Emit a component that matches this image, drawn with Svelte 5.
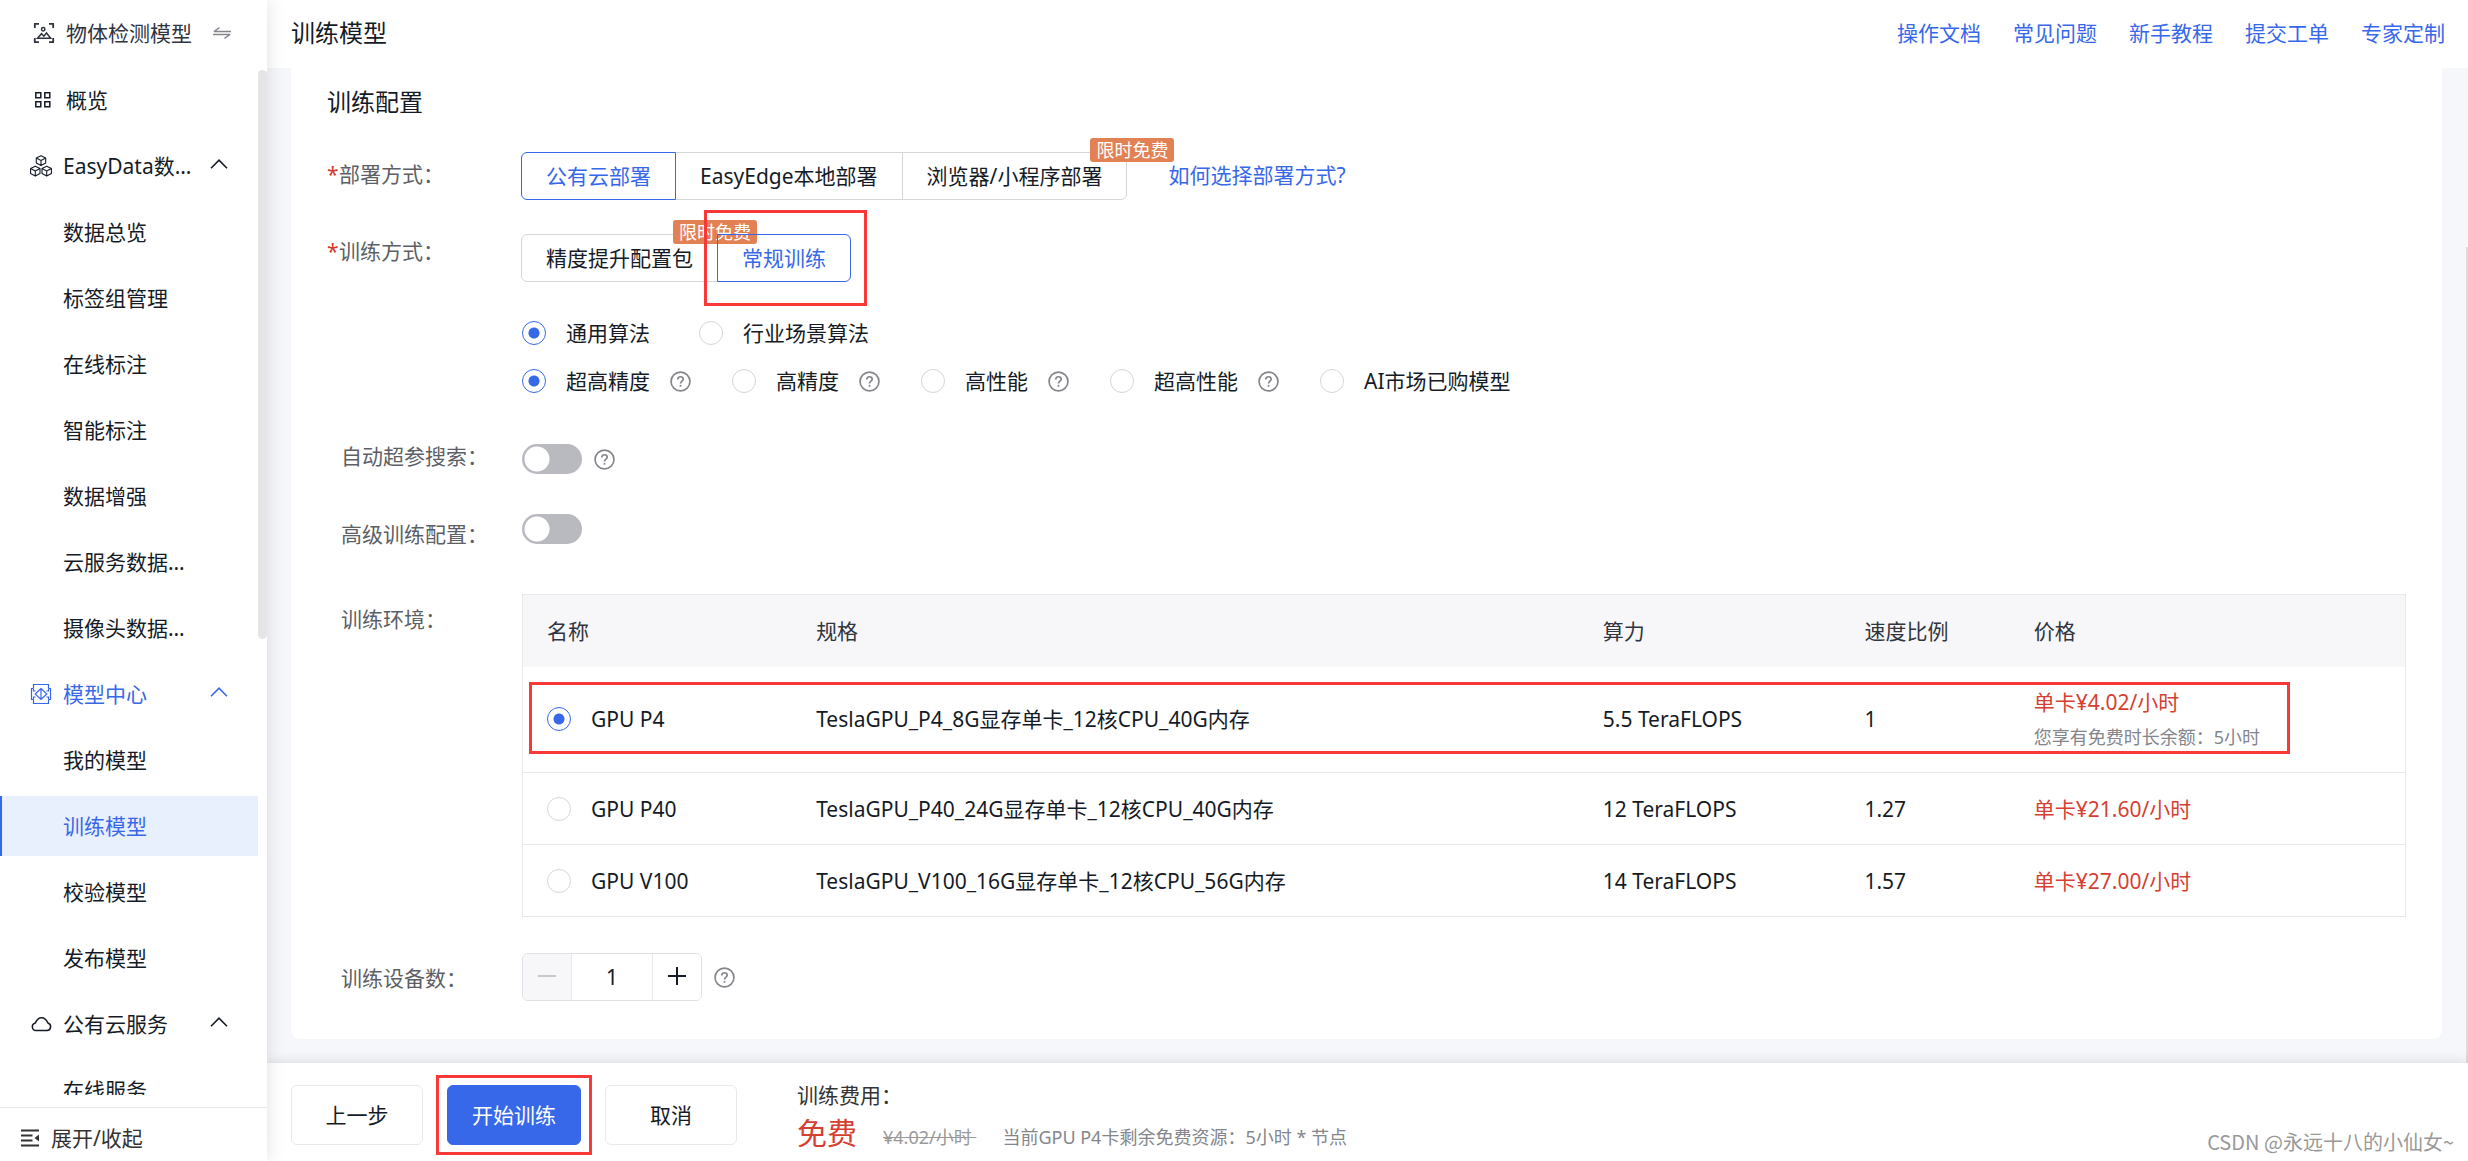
<script>
	const links = ['操作文档', '常见问题', '新手教程', '提交工单', '专家定制'];

	const menu = [
		{ name: '概览', icon: 'grid', top: true },
		{ name: 'EasyData数…', icon: 'cubes', group: true },
		{ name: '数据总览' },
		{ name: '标签组管理' },
		{ name: '在线标注' },
		{ name: '智能标注' },
		{ name: '数据增强' },
		{ name: '云服务数据…' },
		{ name: '摄像头数据…' },
		{ name: '模型中心', icon: 'model', group: true, open: true },
		{ name: '我的模型' },
		{ name: '训练模型', active: true },
		{ name: '校验模型' },
		{ name: '发布模型' },
		{ name: '公有云服务', icon: 'cloud', group: true },
		{ name: '在线服务' }
	];

	const deploys = [
		{ name: '公有云部署' },
		{ name: 'EasyEdge本地部署' },
		{ name: '浏览器/小程序部署', free: true }
	];
	const modes = [{ name: '精度提升配置包', free: true }, { name: '常规训练', marked: true }];

	const algos = ['通用算法', '行业场景算法'];
	const precisions = [
		{ name: '超高精度', help: true },
		{ name: '高精度', help: true },
		{ name: '高性能', help: true },
		{ name: '超高性能', help: true },
		{ name: 'AI市场已购模型' }
	];

	const gpus = [
		{ name: 'GPU P4', spec: 'TeslaGPU_P4_8G显存单卡_12核CPU_40G内存', flops: '5.5 TeraFLOPS', ratio: '1', price: '4.02', free: '您享有免费时长余额：5小时' },
		{ name: 'GPU P40', spec: 'TeslaGPU_P40_24G显存单卡_12核CPU_40G内存', flops: '12 TeraFLOPS', ratio: '1.27', price: '21.60' },
		{ name: 'GPU V100', spec: 'TeslaGPU_V100_16G显存单卡_12核CPU_56G内存', flops: '14 TeraFLOPS', ratio: '1.57', price: '27.00' }
	];

	let deploy = $state('公有云部署');
	let mode = $state('常规训练');
	let algo = $state('通用算法');
	let precision = $state('超高精度');
	let gpu = $state('GPU P4');
	let autoSearch = $state(false);
	let advanced = $state(false);
	let count = $state(1);
</script>

{#snippet help()}
	<svg class="help" viewBox="0 0 20 20" fill="none" stroke="currentColor" stroke-width="1.6">
		<circle cx="10" cy="10" r="9" />
		<path d="M7.4 8.1c0-1.6 1.1-2.6 2.6-2.6s2.6 1 2.6 2.4c0 1.7-2.6 1.9-2.6 4" />
		<path d="M10 13.2v1.8" />
	</svg>
{/snippet}

{#snippet chevron()}
	<svg class="chevron" viewBox="0 0 18 10" fill="none" stroke="currentColor" stroke-width="1.6">
		<path d="M1 9.2 9 1.2l8 8" />
	</svg>
{/snippet}

{#snippet icon(kind)}
	<svg class="icon" viewBox="0 0 22 22" fill="none" stroke="currentColor" stroke-width="1.5">
		{#if kind === 'grid'}
			<path d="M3.8 3.8h5v5h-5zM12.8 3.8h5v5h-5zM3.8 12.8h5v5h-5zM12.8 12.8h5v5h-5z" />
		{:else if kind === 'cubes'}
			<g stroke-width="1.1" stroke-linejoin="round">
				<path d="M11 .7l4.7 2.3v5L11 10.5 6.3 8V3zM6.3 3 11 5.4l4.7-2.4M11 5.4v5.1" />
				<path d="M5.3 11.2l4.7 2.3v5l-4.7 2.6-4.7-2.6v-5zM.6 13.5l4.7 2.4 4.7-2.4M5.3 15.9v5.2" />
				<path d="M16.7 11.2l4.7 2.3v5l-4.7 2.6-4.7-2.6v-5zM12 13.5l4.7 2.4 4.7-2.4M16.7 15.9v5.2" />
			</g>
		{:else if kind === 'model'}
			<g stroke-width="1.2">
				<path d="M3.5 5.5V1.5h15v4M3.5 16.5v4h15v-4M3.5 5.5H1.5v11h2M18.5 5.5h2v11h-2" />
				<path d="M11 5.5 5.2 11 11 16.5 16.8 11zM11 5.5v11M3.5 5.5v2.5h2M18.5 5.5v2.5h-2M3.5 16.5V14h2M18.5 16.5V14h-2" />
			</g>
		{:else if kind === 'cloud'}
			<path d="M6 17.6h11a3.9 3.9 0 0 0 .9-7.6C16.5 6.7 14.1 4.7 11.5 4.7S6.7 6.7 5.4 9.9A3.9 3.9 0 0 0 6 17.6z" />
		{:else if kind === 'detect'}
			<path d="M1.8 6V1.8H6M16 1.8h4.2V6M20.2 16v4.2H16M6 20.2H1.8V16" stroke-width="1.8" />
			<circle cx="10.2" cy="7.2" r="1.7" />
			<path d="M4.5 16.2l4-4.5 2.4 2.5 2.6-3.2 4.2 5.2z" />
		{:else if kind === 'fold'}
			<path d="M2 3.5h18M2 8.5h11.5M2 13.5h11.5M2 18.5h18" stroke-width="1.8" />
			<path d="M20 7.5v7L15.5 11z" fill="currentColor" stroke="none" />
		{/if}
	</svg>
{/snippet}

<div class="page">
	<aside>
		<div class="project">
			{@render icon('detect')}
			<span>物体检测模型</span>
			<svg class="swap" viewBox="0 0 18 12" fill="none" stroke="currentColor" stroke-width="1.3" stroke-linejoin="bevel">
				<path d="M18 4.5H1L6.5.6M0 7.5h17l-5.5 3.9" />
			</svg>
		</div>
		<nav>
			{#each menu as item}
				<a href="#top" class="item" class:top={item.top} class:open={item.open} class:active={item.active}>
					{#if item.icon}
						{@render icon(item.icon)}
					{/if}
					<span class="name">{item.name}</span>
					{#if item.group}
						{@render chevron()}
					{/if}
				</a>
			{/each}
			<div class="thumb"></div>
		</nav>
		<button class="fold">{@render icon('fold')}展开/收起</button>
	</aside>

	<main>
		<header>
			<h1>训练模型</h1>
			<div class="links">
				{#each links as link}
					<a href="#top">{link}</a>
				{/each}
			</div>
		</header>

		<div class="scroll">
			<section class="card">
				<h2>训练配置</h2>

				<div class="row deploy">
					<div class="label"><i>*</i>部署方式：</div>
					<div class="field">
						<div class="group">
							{#each deploys as d}
								<button class="option" class:on={deploy === d.name} onclick={() => (deploy = d.name)}>
									{d.name}
									{#if d.free}<span class="badge">限时免费</span>{/if}
								</button>
							{/each}
						</div>
						<a class="which" href="#top">如何选择部署方式?</a>
					</div>
				</div>

				<div class="row mode">
					<div class="label"><i>*</i>训练方式：</div>
					<div>
						<div class="group">
							{#each modes as m}
								<button class="option" class:on={mode === m.name} onclick={() => (mode = m.name)}>
									{m.name}
									{#if m.free}<span class="badge">限时免费</span>{/if}
									{#if m.marked}<span class="mark"></span>{/if}
								</button>
							{/each}
						</div>
						<div class="radios algos">
							{#each algos as a}
								<label><input type="radio" name="algo" value={a} bind:group={algo} />{a}</label>
							{/each}
						</div>
						<div class="radios precisions">
							{#each precisions as p}
								<div class="choice">
									<label><input type="radio" name="precision" value={p.name} bind:group={precision} />{p.name}</label>
									{#if p.help}{@render help()}{/if}
								</div>
							{/each}
						</div>
					</div>
				</div>

				<div class="row auto">
					<label class="label" for="auto">自动超参搜索：</label>
					<div class="field">
						<input id="auto" class="switch" type="checkbox" bind:checked={autoSearch} />
						{@render help()}
					</div>
				</div>

				<div class="row advanced">
					<label class="label" for="advanced">高级训练配置：</label>
					<div class="field">
						<input id="advanced" class="switch" type="checkbox" bind:checked={advanced} />
					</div>
				</div>

				<div class="row env">
					<div class="label">训练环境：</div>
					<table>
						<thead>
							<tr><th>名称</th><th>规格</th><th>算力</th><th>速度比例</th><th>价格</th></tr>
						</thead>
						<tbody>
							{#each gpus as g}
								<tr class:tall={g.free}>
									<td>
										<label><input type="radio" name="gpu" value={g.name} bind:group={gpu} />{g.name}</label>
										{#if g.free}<span class="mark"></span>{/if}
									</td>
									<td>{g.spec}</td>
									<td>{g.flops}</td>
									<td>{g.ratio}</td>
									<td>
										<div class="price">单卡¥{g.price}/小时</div>
										{#if g.free}<div class="left">{g.free}</div>{/if}
									</td>
								</tr>
							{/each}
						</tbody>
					</table>
				</div>

				<div class="row devices">
					<label class="label" for="count">训练设备数：</label>
					<div class="field">
						<div class="stepper">
							<button class="minus" aria-label="减少" disabled={count < 2} onclick={() => count--}>
								<svg viewBox="0 0 18 18" stroke="currentColor" stroke-width="1.6"><path d="M0 9h18" /></svg>
							</button>
							<input id="count" type="text" bind:value={count} />
							<button class="plus" aria-label="增加" onclick={() => count++}>
								<svg viewBox="0 0 18 18" stroke="currentColor" stroke-width="2"><path d="M0 9h18M9 0v18" /></svg>
							</button>
						</div>
						{@render help()}
					</div>
				</div>
			</section>
			<div class="bar"></div>
		</div>

		<footer>
			<button class="btn">上一步</button>
			<button class="btn primary">开始训练<span class="mark"></span></button>
			<button class="btn">取消</button>
			<div class="cost">
				<div>训练费用：</div>
				<div class="sum">
					<strong>免费</strong>
					<del>¥4.02/小时&nbsp;</del>
					<span>当前GPU P4卡剩余免费资源：5小时 * 节点</span>
				</div>
			</div>
			<div class="sign">CSDN @永远十八的小仙女~</div>
		</footer>
	</main>
</div>

<style>
	:global(body) {
		margin: 0;
		background: #fff;
	}

	.page {
		display: grid;
		grid-template-columns: 267px 1fr;
		height: 100vh;
		overflow: hidden;
		font-family: "Noto Sans", "Noto Sans CJK SC", sans-serif;
		font-size: 21px;
		line-height: 30px;
		color: #151b26;
	}
	a {
		color: #3868ea;
		text-decoration: none;
	}
	button, input {
		margin: 0;
		padding: 0;
		font: inherit;
		color: inherit;
		box-sizing: border-box;
	}
	button {
		background: #fff;
		border: none;
		cursor: pointer;
		white-space: nowrap;
	}
	svg {
		flex: none;
		display: block;
	}

	/* ---- sidebar ---- */
	aside {
		display: flex;
		flex-direction: column;
		min-height: 0;
		background: #fff;
		box-shadow: 0 0 18px rgba(0, 0, 0, 0.12);
		z-index: 2;
	}
	.icon {
		width: 22px;
		height: 22px;
	}
	.project {
		display: flex;
		align-items: center;
		height: 66px;
		padding: 0 36px 0 33px;
		color: #2f3440;
	}
	.project span {
		flex: 1;
		padding-left: 11px;
	}
	.swap {
		width: 18px;
		height: 12px;
		color: #84868c;
	}
	nav {
		position: relative;
		flex: 1;
		min-height: 0;
		display: flex;
		flex-direction: column;
		gap: 6px;
		padding: 4px 9px 0 0;
		margin-bottom: 12px;
		overflow: hidden;
	}
	.item {
		flex: none;
		display: flex;
		align-items: center;
		box-sizing: border-box;
		height: 60px;
		padding: 0 30px 0 63px;
		color: #151b26;
	}
	.item:has(.icon) {
		padding-left: 30px;
		gap: 11px;
	}
	.item.top {
		padding-left: 32px;
		gap: 12px;
	}
	.name {
		flex: 1;
		white-space: nowrap;
	}
	.item.open {
		color: #3868ea;
	}
	.item.active {
		color: #3868ea;
		background: #e8effd;
		box-shadow: inset 2px 0 #3868ea;
	}
	.chevron {
		width: 18px;
		height: 10px;
		margin-bottom: 4px;
	}
	.thumb {
		position: absolute;
		top: 4px;
		right: 0;
		width: 9px;
		height: 569px;
		border-radius: 5px;
		background: #e5e5e5;
	}
	.fold {
		display: flex;
		align-items: center;
		gap: 10px;
		height: 54px;
		padding: 6px 0 0 19px;
		border-top: 1px solid #e8e9eb;
		color: #333;
		box-sizing: border-box;
	}

	/* ---- top bar ---- */
	main {
		display: flex;
		flex-direction: column;
		min-width: 0;
		min-height: 0;
		background: #f6f7fa;
	}
	header {
		display: flex;
		justify-content: space-between;
		align-items: center;
		height: 66px;
		padding: 0 23px 2px 24px;
		background: #fff;
	}
	h1, h2 {
		margin: 0;
		font-size: 24px;
		line-height: 36px;
		font-weight: 400;
	}
	.links {
		display: flex;
		gap: 32px;
	}

	/* ---- form ---- */
	.scroll {
		position: relative;
		flex: 1;
		min-height: 0;
		padding: 0 26px 24px 24px;
		overflow: hidden;
	}
	.bar {
		position: absolute;
		top: 179px;
		right: 0;
		bottom: 0;
		width: 2px;
		background: #dcdcde;
	}
	.card {
		padding: 16px 36px 38px;
		background: #fff;
		border-radius: 0 0 9px 9px;
	}
	.row {
		display: grid;
		grid-template-columns: 195px 1fr;
		align-items: start;
	}
	.deploy { margin-top: 32px; }
	.mode { margin-top: 34px; }
	.auto { margin-top: 36px; }
	.advanced { margin-top: 40px; }
	.env { margin-top: 45px; }
	.devices { margin-top: 36px; }
	.label {
		padding: 10px 0 0 14px;
		color: #5c5f66;
	}
	.label i {
		display: inline-block;
		width: 12px;
		font-style: normal;
		color: #d8392c;
	}
	.deploy .label { padding: 7px 0 0; }
	.mode .label { padding: 2px 0 0; }
	.auto .label { padding-top: 0; }
	.advanced .label { padding-top: 5px; }
	.auto .field { padding-top: 3px; }
	.field {
		display: flex;
		align-items: center;
		gap: 12px;
	}
	.group {
		display: flex;
	}
	.option {
		position: relative;
		height: 48px;
		padding: 0 24px;
		border: 1px solid #d4d6d9;
		margin-left: -1px;
	}
	.option:first-child {
		border-radius: 6px 0 0 6px;
	}
	.option:last-child {
		border-radius: 0 6px 6px 0;
	}
	.option.on {
		z-index: 1;
		color: #3868ea;
		border-color: #3868ea;
	}
	.badge {
		position: absolute;
		top: -15px;
		right: -48px;
		z-index: 2;
		padding: 0 6px;
		border-radius: 3px;
		background: #e28254;
		color: #fff;
		font-size: 18px;
		line-height: 24px;
	}
	.mode .badge {
		right: -40px;
	}
	.option:has(.badge) {
		z-index: 2;
	}
	.option:has(.mark) {
		z-index: 3;
		background: none;
	}
	.which {
		padding: 0 0 2px 29px;
	}
	.mark {
		position: absolute;
		border: 3px solid #f93838;
		pointer-events: none;
	}
	.option .mark {
		inset: -25px -17px -25px -14px;
	}

	.radios {
		display: flex;
		height: 48px;
	}
	.algos {
		gap: 49px;
		margin-top: 27px;
	}
	.precisions {
		gap: 41px;
	}
	.radios label, .choice, td label {
		display: flex;
		align-items: center;
		gap: 20px;
	}
	input[type="radio"] {
		appearance: none;
		flex: none;
		width: 24px;
		height: 24px;
		border: 1px solid #d4d6d9;
		border-radius: 50%;
		background: #fff;
	}
	input[type="radio"]:checked {
		border-color: #3868ea;
		background: radial-gradient(circle, #3868ea 5px, #fff 6px);
	}
	.help {
		width: 21px;
		height: 21px;
		color: #84868c;
	}
	.switch {
		appearance: none;
		width: 60px;
		height: 30px;
		border-radius: 15px;
		background: radial-gradient(circle at 15px 15px, #fff 12px, transparent 13px), #b8babf;
	}
	.switch:checked {
		background: radial-gradient(circle at 45px 15px, #fff 12px, transparent 13px), #3868ea;
	}

	table {
		width: 100%;
		table-layout: fixed;
		border-collapse: separate;
		border-spacing: 0;
		border: 1px solid #e8e9eb;
		border-bottom: none;
	}
	th, td {
		box-sizing: border-box;
		height: 72px;
		padding: 0 24px;
		text-align: left;
		font-weight: 400;
	}
	th {
		background: #f7f7f9;
		color: #303540;
	}
	th:nth-child(1) { width: 14.3%; }
	th:nth-child(2) { width: 41.8%; }
	th:nth-child(3) { width: 13.9%; }
	th:nth-child(4) { width: 9%; }
	td {
		border-bottom: 1px solid #e8e9eb;
	}
	tr.tall {
		position: relative;
	}
	tr.tall td {
		height: 106px;
		padding-bottom: 2px;
	}
	tr .mark {
		top: 15px;
		left: 6px;
		right: 115px;
		height: 66px;
	}
	.price {
		color: #d53f32;
	}
	.left {
		margin-top: 7px;
		color: #84868c;
		font-size: 18px;
		line-height: 27px;
	}

	.stepper {
		display: flex;
		box-sizing: border-box;
		height: 48px;
		border: 1px solid #e0e1e4;
		border-radius: 6px;
		overflow: hidden;
	}
	.stepper button {
		display: flex;
		align-items: center;
		justify-content: center;
		width: 48px;
		padding-bottom: 3px;
	}
	.stepper svg {
		width: 18px;
		height: 18px;
	}
	.stepper .minus:disabled {
		background: #f7f7f9;
		color: #b8babf;
	}
	.stepper input {
		width: 82px;
		border: solid #e8e9eb;
		border-width: 0 1px;
		text-align: center;
	}

	/* ---- bottom bar ---- */
	footer {
		display: flex;
		align-items: center;
		gap: 24px;
		height: 98px;
		padding: 0 14px 0 24px;
		box-sizing: border-box;
		background: #fff;
		box-shadow: 0 0 12px rgba(0, 0, 0, 0.14);
		z-index: 1;
	}
	.btn {
		position: relative;
		min-width: 132px;
		height: 60px;
		margin-bottom: -6px;
		padding: 0 24px;
		border: 1px solid #e8e9eb;
		border-radius: 6px;
	}
	.primary {
		background: #3868ea;
		border-color: #3868ea;
		color: #fff;
	}
	.primary .mark {
		inset: -11px -12px;
	}
	.cost {
		flex: 1;
		padding: 16px 0 0 36px;
		color: #333;
	}
	.sum {
		display: flex;
		align-items: baseline;
		gap: 26px;
		line-height: 46px;
		font-size: 18px;
		color: #84868c;
	}
	.sum strong {
		font-size: 30px;
		font-weight: 400;
		color: #d53f32;
	}
	.sum del {
		color: #999;
	}
	.sign {
		align-self: flex-end;
		padding-bottom: 4px;
		font-family: "Noto Sans CJK SC", sans-serif;
		font-size: 20px;
		color: #999;
	}
</style>
